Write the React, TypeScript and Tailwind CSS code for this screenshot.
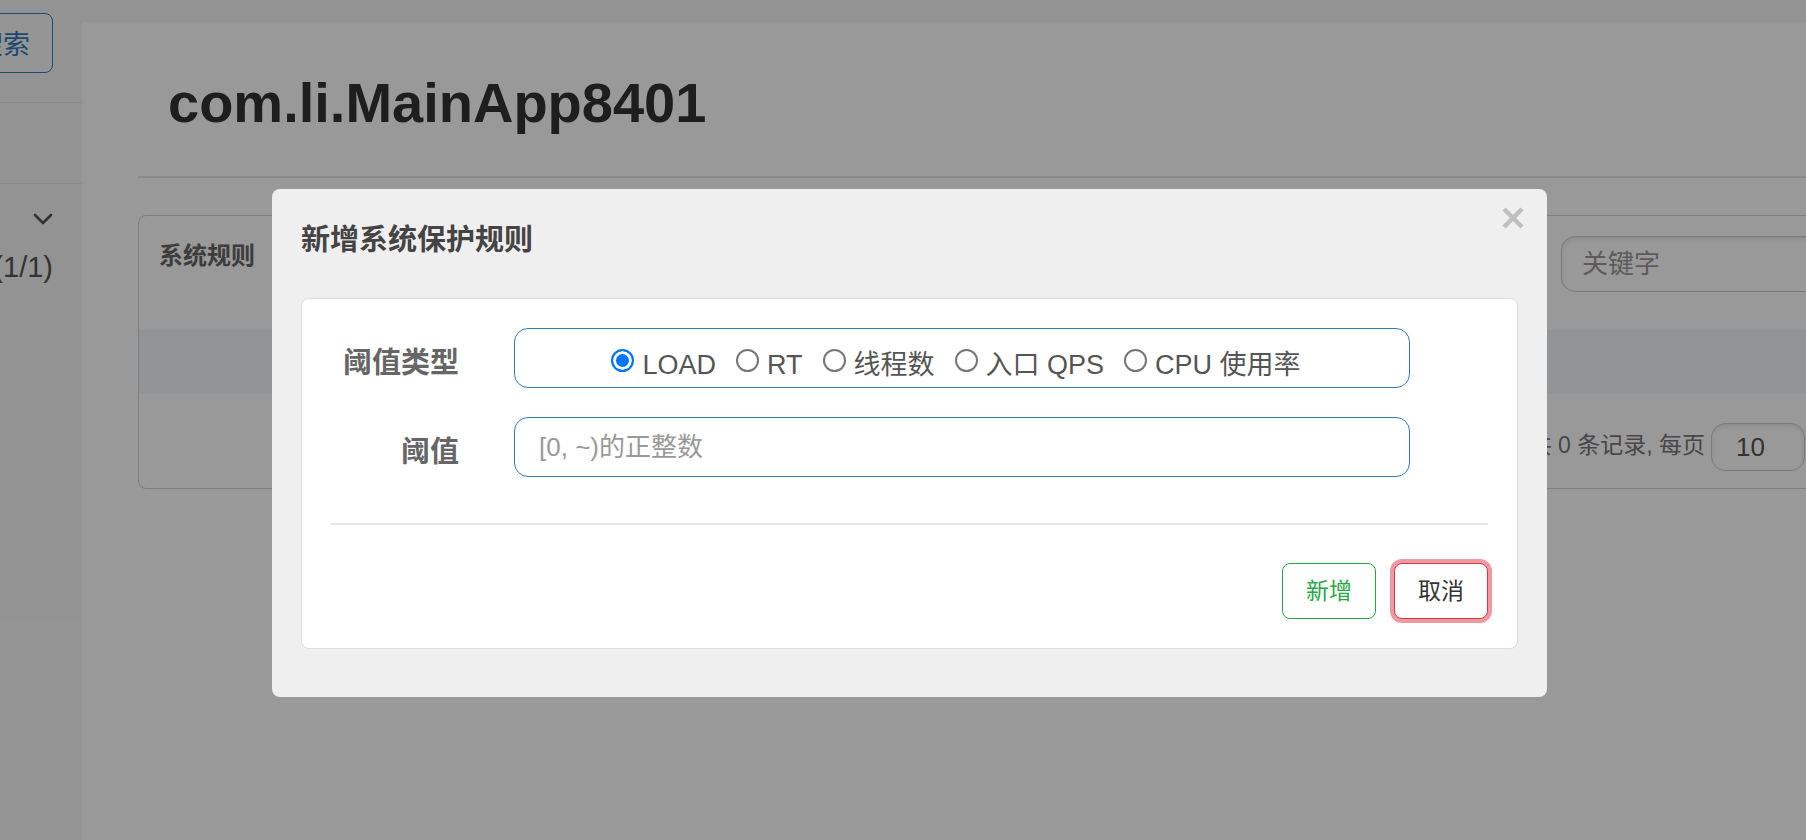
import { useState } from "react";
import { ChevronDown } from "lucide-react";

const thresholdTypes = ["LOAD", "RT", "线程数", "入口 QPS", "CPU 使用率"];

function Sidebar() {
  return (
    <aside className="flex w-[82px] shrink-0 flex-col overflow-hidden bg-[#f8f8f8]">
      <div className="flex h-[621px] flex-col bg-[#f5f5f5] text-[#555]">
        <div className="flex h-[103px] justify-end border-b border-[#e7e7e7] pt-[13px] pr-[29px]">
          <button
            type="button"
            className="h-[60px] shrink-0 rounded-lg border border-[#337ab7] bg-[#f8f8f8] px-[22px] pt-1 text-[27px] leading-8 text-[#337ab7]"
          >
            搜索
          </button>
        </div>
        <div className="h-[81px] border-b border-[#e7e7e7]" />
        <nav className="flex flex-col items-end pt-[19px] pr-[29px]">
          <ChevronDown className="-mr-1.5 size-8" strokeWidth={2} absoluteStrokeWidth />
          <a href="#app" className="mt-3 text-[29px] leading-10 whitespace-nowrap">
            (1/1)
          </a>
        </nav>
      </div>
    </aside>
  );
}

function RulesPage() {
  return (
    <main className="flex min-w-0 grow flex-col overflow-hidden bg-white">
      <div className="h-[22px] shrink-0 bg-[#f5f5f5]" />
      <div className="-mr-12 pl-14">
        <div className="border-b-2 border-[#e5e5e5] pt-[49px] pb-[41px] pl-[30px]">
          <h1 className="text-[56px] leading-16 font-bold text-[#333]">com.li.MainApp8401</h1>
        </div>
        <section className="mt-[37px] rounded-lg border border-[#d3d3d3]">
          <header className="flex h-[114px] items-start justify-between pl-5">
            <h2 className="pt-6 text-[24px] leading-8 font-bold text-[#666]">系统规则</h2>
            <input
              type="text"
              aria-label="关键字"
              placeholder="关键字"
              className="mt-5 h-14 w-[292px] rounded-[14px] border border-[#ccc] px-5 text-[26px] text-[#555] shadow-[inset_0_2px_4px_rgba(0,0,0,0.1)] placeholder:text-[#999]"
            />
          </header>
          <div className="h-16 bg-[#f3f5f7]" />
          <footer className="flex h-[94px] items-center justify-end gap-1.5 pt-2 pr-12">
            <label htmlFor="page-size" className="text-[23px] leading-8 text-[#777]">
              共 0 条记录, 每页
            </label>
            <input
              id="page-size"
              type="text"
              defaultValue="10"
              className="mt-1 h-12 w-[94px] rounded-[14px] border border-[#ccc] px-6 text-[26px] text-[#555] shadow-[inset_0_2px_4px_rgba(0,0,0,0.1)]"
            />
          </footer>
        </section>
      </div>
    </main>
  );
}

function RuleDialog() {
  const [type, setType] = useState("LOAD");
  const [value, setValue] = useState("");

  return (
    <div
      role="dialog"
      aria-modal="true"
      aria-labelledby="dialog-title"
      className="w-full max-w-[1275px] rounded-lg bg-[#efefef] px-[29px] pb-12"
    >
      <header className="flex h-[109px] items-start justify-between">
        <h2 id="dialog-title" className="pt-[33px] text-[29px] leading-9 font-bold text-[#444]">
          新增系统保护规则
        </h2>
        <button type="button" aria-label="关闭" className="-mr-[11px] p-1 pt-[17px] text-[#bfbfbf]">
          <svg viewBox="0 0 24 24" className="size-6" fill="none" stroke="currentColor" strokeWidth="4.5">
            <path d="M3 3 21 21M21 3 3 21" />
          </svg>
        </button>
      </header>
      <form className="rounded-lg border border-[#ddd] bg-white px-[29px] pt-[29px] pb-[29px]">
        <div className="flex flex-col gap-[29px] pr-[78px]">
          <div className="flex items-center gap-[55px]">
            <span id="type-label" className="w-32 shrink-0 pt-2.5 text-right text-[29px] leading-9 font-bold text-[#666]">
              阈值类型
            </span>
            <div
              role="radiogroup"
              aria-labelledby="type-label"
              className="flex h-[60px] grow items-center justify-center gap-5 rounded-[14px] border border-[#337ab7] pt-3.5 pr-3"
            >
              {thresholdTypes.map((name) => (
                <label key={name} className="flex items-start gap-2 text-[27px] leading-8 text-[#555]">
                  <input
                    type="radio"
                    name="threshold-type"
                    checked={type === name}
                    onChange={() => setType(name)}
                    className="size-[23px] appearance-none rounded-full border-2 border-[#767676] bg-white checked:border-[#0075ff] checked:bg-[#0075ff] checked:shadow-[inset_0_0_0_3px_#fff]"
                  />
                  {name}
                </label>
              ))}
            </div>
          </div>
          <div className="flex items-center gap-[55px]">
            <label
              htmlFor="threshold"
              className="w-32 shrink-0 pt-2.5 text-right text-[29px] leading-9 font-bold text-[#666]"
            >
              阈值
            </label>
            <input
              id="threshold"
              type="text"
              value={value}
              onChange={(event) => setValue(event.target.value)}
              placeholder="[0, ~)的正整数"
              className="h-[60px] min-w-0 grow rounded-[14px] border border-[#337ab7] px-6 text-[26px] text-[#555] placeholder:text-[#999]"
            />
          </div>
        </div>
        <hr className="mt-[46px] border-t-2 border-[#e5e5e5]" />
        <div className="mt-[38px] flex justify-end gap-[18px]">
          <button
            type="button"
            className="h-14 w-[94px] rounded-lg border border-[#28a745] bg-white text-[23px] leading-8 text-[#28a745]"
          >
            新增
          </button>
          <button
            type="button"
            className="h-14 w-[94px] rounded-lg border border-[#dc3545] bg-white text-[23px] leading-8 text-[#333] ring-4 ring-[#dc3545]/50"
          >
            取消
          </button>
        </div>
      </form>
    </div>
  );
}

export default function App() {
  return (
    <div className="relative flex min-h-screen overflow-hidden font-['Liberation_Sans','Noto_Sans_CJK_SC',sans-serif]">
      <Sidebar />
      <RulesPage />
      <div className="absolute inset-0 flex items-start justify-center bg-black/40 pt-[189px] pl-[13px]">
        <RuleDialog />
      </div>
    </div>
  );
}
